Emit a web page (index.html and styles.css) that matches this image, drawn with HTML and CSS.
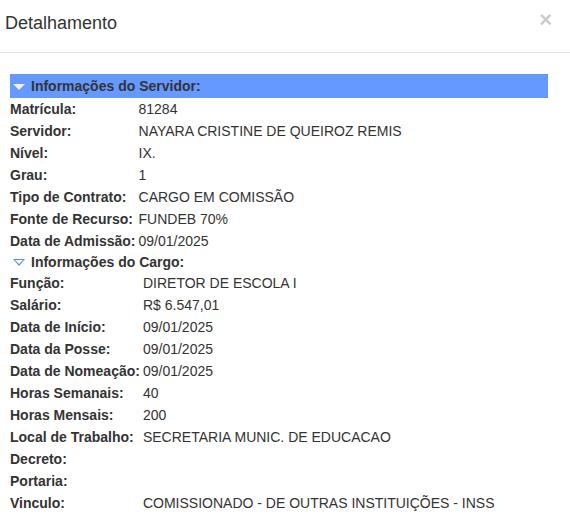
FILE: index.html
```html
<!DOCTYPE html>
<html lang="pt-BR">
<head>
    <meta charset="UTF-8">
    <title>Detalhamento</title>
    <link rel="stylesheet" href="styles.css">
</head>
<body>

    <!-- Modal de detalhamento -->
    <div class="modal-content">
        <div class="modal-header">
            <h4 class="modal-title">Detalhamento</h4>
            <button class="close">&times;</button>
        </div>

        <div class="modal-body">
            <!-- Servidor -->
            <div class="section-bar">
                <span class="arrow arrow-white"></span>
                Informações do Servidor:
            </div>
            <table class="info-table">
                <tr><td class="label">Matrícula:</td><td>81284</td></tr>
                <tr><td class="label">Servidor:</td><td>NAYARA CRISTINE DE QUEIROZ REMIS</td></tr>
                <tr><td class="label">Nível:</td><td>IX.</td></tr>
                <tr><td class="label">Grau:</td><td>1</td></tr>
                <tr><td class="label">Tipo de Contrato:</td><td>CARGO EM COMISSÃO</td></tr>
                <tr><td class="label">Fonte de Recurso:</td><td>FUNDEB 70%</td></tr>
                <tr><td class="label">Data de Admissão:</td><td>09/01/2025</td></tr>
            </table>

            <!-- Cargo -->
            <div class="section-plain">
                <span class="arrow arrow-blue"></span>
                Informações do Cargo:
            </div>
            <table class="info-table">
                <tr><td class="label">Função:</td><td>DIRETOR DE ESCOLA I</td></tr>
                <tr><td class="label">Salário:</td><td>R$ 6.547,01</td></tr>
                <tr><td class="label">Data de Início:</td><td>09/01/2025</td></tr>
                <tr><td class="label">Data da Posse:</td><td>09/01/2025</td></tr>
                <tr><td class="label">Data de Nomeação:</td><td>09/01/2025</td></tr>
                <tr><td class="label">Horas Semanais:</td><td>40</td></tr>
                <tr><td class="label">Horas Mensais:</td><td>200</td></tr>
                <tr><td class="label">Local de Trabalho:</td><td>SECRETARIA MUNIC. DE EDUCACAO</td></tr>
                <tr><td class="label">Decreto:</td><td></td></tr>
                <tr><td class="label">Portaria:</td><td></td></tr>
                <tr><td class="label">Vinculo:</td><td>COMISSIONADO - DE OUTRAS INSTITUIÇÕES - INSS</td></tr>
            </table>
        </div>
    </div>

</body>
</html>
```

FILE: styles.css
```css
body {
    margin: 0;
    font-family: "Liberation Sans", Arial, sans-serif;
    font-size: 14px;
    color: #333;
    background: #fff;
}

.modal-content {
    width: 570px;
}

/* header */
.modal-header {
    display: flex;
    align-items: center;
    justify-content: space-between;
    height: 53px;
    padding: 0 18px 0 5px;
    border-bottom: 1px solid #e5e5e5;
    box-sizing: border-box;
    width: 570px;
}

.modal-title {
    margin: 0 0 6px 0;
    font-size: 18px;
    font-weight: normal;
    color: #333;
}

.close {
    margin: 0 0 12px 0;
    padding: 0;
    border: none;
    background: none;
    font-family: "Liberation Sans", Arial, sans-serif;
    font-size: 22px;
    font-weight: bold;
    line-height: 1;
    color: #000;
    opacity: 0.2;
    cursor: pointer;
}

.modal-body {
    padding: 21px 10px 0 10px;
    width: 538px;
}

/* section titles */
.section-bar,
.section-plain {
    display: flex;
    align-items: center;
    height: 24px;
    font-weight: bold;
    color: #333;
}

.section-bar {
    background-color: #6699ff;
}

.section-plain {
    height: 20px;
}

.arrow {
    display: inline-block;
    width: 0;
    height: 0;
    margin: 1px 6px 0 3px;
    border-left: 6px solid transparent;
    border-right: 6px solid transparent;
    position: relative;
}

.arrow-white {
    border-top: 6px solid #eef3ff;
}

.arrow-blue {
    border-top: 7px solid #5b8fd6;
}

.arrow-blue::after {
    content: "";
    position: absolute;
    left: -4px;
    top: -6px;
    border-left: 4px solid transparent;
    border-right: 4px solid transparent;
    border-top: 4px solid #fff;
}

/* data rows */
.info-table {
    border-collapse: collapse;
}

.info-table td {
    height: 22px;
    padding: 0 3px 0 0;
    white-space: nowrap;
}

.info-table td.label {
    font-weight: bold;
}
```
